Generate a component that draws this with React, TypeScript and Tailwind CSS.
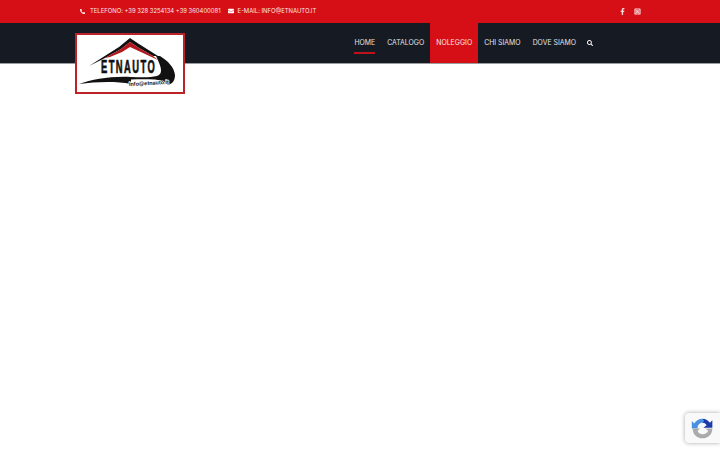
import { FaFacebookF, FaInstagramSquare, FaPhone, FaEnvelope, FaSearch } from "react-icons/fa";

const links = ["HOME", "CATALOGO", "NOLEGGIO", "CHI SIAMO", "DOVE SIAMO"];

function Logo() {
  return (
    <div className="absolute left-[75px] top-[33px] h-[61px] w-[110px] border-2 border-[#bb2329] bg-white">
      <svg viewBox="0 0 106 57" className="h-full w-full">
        <path d="M12 31 L42 12 L53 3 L62 9 L81 21 L76 21 L62 13 L53 7 L44 14 L28 23 Z" fill="#111" />
        <path d="M28 23 L44 14 L53 7 L62 13 L76 21 L81 25 L66 18 L53 12 L45 17 L33 22 Z" fill="#b3161c" />
        <path d="M79 21 L83 21 C91 26 97 32 98 40 C98 46 95 49 91 50 C88 47 84 45 78 44.5 C70 44 62 44 54 44.5 L54 42 C62 42 72 43 80 41 C86 39 85 33 79 21 Z" fill="#111" />
        <path d="M2 49 C16 44 34 41 54 42 L54 49 C38 46 18 47 2 49 Z" fill="#111" />
        <text transform="translate(24 38) scale(0.72 1.4)" fontFamily="'Liberation Sans', sans-serif" fontWeight="700" fontSize="13" letterSpacing="2" fill="#111" stroke="#111" strokeWidth="0.5">ETNAUTO</text>
        <text x="52" y="51" fontFamily="'Liberation Sans', sans-serif" fontWeight="700" fontSize="5.5" textLength="40" lengthAdjust="spacingAndGlyphs" transform="rotate(-3 52 51)" fill="#111" stroke="#fff" strokeWidth="1.2" paintOrder="stroke">info@etnauto.it</text>
      </svg>
    </div>
  );
}

function Recaptcha() {
  return (
    <div className="absolute left-[685px] top-[413px] flex h-[30px] w-[35px] items-center justify-center rounded-l-sm bg-[#f9f9f9] shadow-[0_0_4px_rgba(0,0,0,0.35)]">
      <svg viewBox="0 0 28 28" className="h-[23px] w-[23px]">
        <path d="M14 2 C18 2 21 4 23 7 L26 4 V13 H15 L19 10 C18 8 16 7 14 7 Z" fill="#1c3aa9" />
        <path d="M14 2 C10 2 6 4 4 8 L1 5 V14 H8 C8 10 10 7 14 7 L16 5 Z" fill="#4a90e2" />
        <path d="M2 14 H11 L8 17 C9 20 12 21 14 21 C17 21 19 20 21 17 L18 14 H26 C26 21 21 26 14 26 C7 26 2 21 2 14 Z" fill="#ababab" />
      </svg>
    </div>
  );
}

export default function App() {
  return (
    <div className="relative h-[450px] w-[720px] overflow-hidden bg-white font-['Inter','Liberation_Sans',sans-serif]">
      <div className="flex h-[23px] items-center justify-between bg-[#d60f16] pl-[80px] pr-[79px] text-[5.9px] text-[#fbe6e6]">
        <div className="flex items-center">
          <FaPhone className="mr-[5px] h-[5px] w-[5px] -scale-x-100 text-white" />
          <span>TELEFONO: +39 328 3254134 +39 360400081</span>
          <FaEnvelope className="ml-[7px] mr-[4px] h-[6px] w-[6px] text-white" />
          <span>E-MAIL: INFO@ETNAUTO.IT</span>
        </div>
        <div className="flex items-center gap-[8px] text-[#f8dcdc]">
          <FaFacebookF className="h-[7px] w-[7px]" />
          <FaInstagramSquare className="h-[7px] w-[7px]" />
        </div>
      </div>
      <div className="flex h-[41px] items-stretch justify-end border-b border-[#9a9ca0] bg-[#161a23] pr-[127px]">
        <nav className="flex items-stretch">
          {links.map((l) => {
            const active = l === "NOLEGGIO";
            return (
              <a
                key={l}
                className={
                  active
                    ? "flex items-center bg-[#d60f16] px-[6px] text-[6.9px] text-[#fbe6e6]"
                    : "relative flex items-center px-[6px] text-[6.9px] text-[#e2e3e6]"
                }
              >
                {l}
                {l === "HOME" && (
                  <span className="absolute bottom-[9px] left-[6px] right-[6px] h-[2px] bg-[#c0121a]" />
                )}
              </a>
            );
          })}
          <div className="flex items-center pl-[5px]">
            <FaSearch className="-mt-px h-[6px] w-[6px] text-white" />
          </div>
        </nav>
      </div>
      <Logo />
      <Recaptcha />
    </div>
  );
}
